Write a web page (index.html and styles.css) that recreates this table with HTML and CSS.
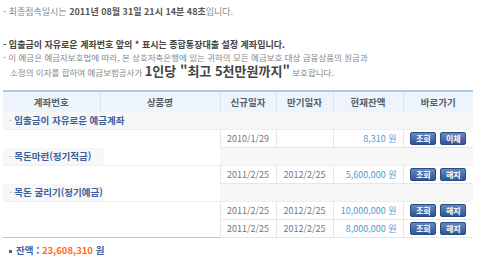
FILE: index.html
```html
<!DOCTYPE html>
<html lang="ko">
<head>
<meta charset="utf-8">
<link rel="stylesheet" href="styles.css">
</head>
<body>
<div class="page">
  <p class="login">- 최종접속일시는 <b>2011년 08월 31일 21시 14분 48초</b>입니다.</p>
  <div class="notes">
    <p class="note strong">- 입출금이 자유로운 계좌번호 앞의 * 표시는 종합통장대출 설정 계좌입니다.</p>
    <p class="note">- 이 예금은 예금자보호법에 따라, 본 상호저축은행에 있는 귀하의 모든 예금보호 대상 금융상품의 원금과</p>
    <p class="note indent">소정의 이자를 합하여 예금보험공사가 <span class="big">1인당 "최고 5천만원까지"</span> 보호합니다.</p>
  </div>
  <table class="acct">
    <colgroup>
      <col class="c1"><col class="c2"><col class="c3"><col class="c4"><col class="c5"><col class="c6">
    </colgroup>
    <thead>
      <tr><th>계좌번호</th><th>상품명</th><th>신규일자</th><th>만기일자</th><th>현재잔액</th><th class="last">바로가기</th></tr>
    </thead>
    <tbody>
      <tr class="group"><td colspan="6"><div class="gline full"><span class="gtitle">· <b>입출금이 자유로운 예금계좌</b></span></div></td></tr>
      <tr class="data"><td class="blank"></td><td class="blank"></td><td>2010/1/29</td><td></td><td class="amt">8,310 원</td><td class="go"><span class="btn">조회</span><span class="btn">이체</span></td></tr>
      <tr class="group"><td colspan="6"><div class="gline"><span class="gtitle">· <b>목돈마련(정기적금)</b></span><span class="gap"></span><span class="fill"></span></div></td></tr>
      <tr class="data"><td class="blank"></td><td class="blank"></td><td>2011/2/25</td><td>2012/2/25</td><td class="amt">5,600,000 원</td><td class="go"><span class="btn">조회</span><span class="btn">해지</span></td></tr>
      <tr class="group"><td colspan="6"><div class="gline"><span class="gtitle">· <b>목돈 굴리기(정기예금)</b></span><span class="gap"></span><span class="fill"></span></div></td></tr>
      <tr class="data"><td class="blank"></td><td class="blank"></td><td>2011/2/25</td><td>2012/2/25</td><td class="amt">10,000,000 원</td><td class="go"><span class="btn">조회</span><span class="btn">해지</span></td></tr>
      <tr class="data"><td class="blank"></td><td class="blank"></td><td>2011/2/25</td><td>2012/2/25</td><td class="amt">8,000,000 원</td><td class="go"><span class="btn">조회</span><span class="btn">해지</span></td></tr>
    </tbody>
  </table>
  <p class="total"><span class="sq"></span><b>잔액 : </b><b class="num">23,608,310</b> <b>원</b></p>
</div>
</body>
</html>
```
FILE: styles.css
```css
html, body {
  margin: 0;
  padding: 0;
  background: #ffffff;
}
body {
  font-family: "Noto Sans CJK KR", "DejaVu Sans", sans-serif;
  color: #777777;
}
.page {
  width: 480px;
  height: 257px;
  overflow: hidden;
}
p { margin: 0; }
.login {
  padding: 6px 0 0 3px;
  font-size: 9px;
  line-height: 12px;
  color: #888888;
}
.login b { color: #555555; }
.notes {
  padding: 21px 0 0 3px;
}
.note {
  font-size: 8.5px;
  line-height: 12px;
  color: #888888;
  white-space: nowrap;
}
.note.strong {
  font-weight: bold;
  color: #444444;
  font-size: 9px;
}
.note.indent {
  padding-left: 7px;
  line-height: 16px;
}
.big {
  font-size: 13px;
  font-weight: bold;
  color: #444444;
}
.acct {
  margin: 10px 0 0 3px;
  width: 470px;
  border-collapse: collapse;
  table-layout: fixed;
  border-bottom: 1px solid #a9cbe9;
}
.c1 { width: 97px; }
.c2 { width: 120px; }
.c3 { width: 56px; }
.c4 { width: 57px; }
.c5 { width: 70px; }
.c6 { width: 70px; }
.acct th {
  height: 20px;
  padding: 0;
  background: #eef4fb;
  border-top: 2px solid #a9cbe9;
  border-right: 1px solid #d9e5f1;
  font-size: 9.5px;
  font-weight: bold;
  color: #555f6a;
  text-align: center;
}
.acct th.last { border-right: none; }
.group td {
  padding: 0;
  height: 17px;
}
.gline {
  display: flex;
  height: 17px;
  border-bottom: 1px solid #eeeeee;
}
.gline.full { background: #f7f7f7; }
.gtitle {
  width: 101px;
  flex: none;
  background: #f7f7f7;
  overflow: hidden;
  white-space: nowrap;
  font-size: 9.5px;
  line-height: 17px;
  color: #8899aa;
  padding-left: 6px;
  box-sizing: border-box;
}
.gline.full .gtitle { width: auto; }
.gtitle b { color: #3b62a0; }
.gap {
  width: 116px;
  flex: none;
  background: #ffffff;
}
.fill {
  flex: 1;
  background: #f7f7f7;
}
.data td {
  height: 17px;
  padding: 0;
  border-left: 1px solid #e6e6e6;
  border-bottom: 1px solid #e6e6e6;
  font-size: 9px;
  color: #777777;
  text-align: center;
  white-space: nowrap;
}
.data td.blank {
  border: none;
}
.data td.amt {
  text-align: right;
  padding-right: 6px;
  color: #5598cc;
}
.data td.go {
  font-size: 0;
}
.btn {
  display: inline-block;
  width: 24px;
  height: 11px;
  margin: 0 2px;
  border: 1px solid #2b4c82;
  border-radius: 2px;
  background: linear-gradient(#6489c0, #2f5693);
  color: #ffffff;
  font-size: 8px;
  font-weight: bold;
  line-height: 11px;
  text-align: center;
  vertical-align: middle;
}
.total {
  padding: 6px 0 0 9px;
  font-size: 9.5px;
  line-height: 12px;
  color: #3b62a0;
}
.sq {
  display: inline-block;
  width: 3px;
  height: 3px;
  background: #3b62a0;
  margin-right: 4px;
  vertical-align: middle;
}
.num { color: #ff6a1a; }
```
